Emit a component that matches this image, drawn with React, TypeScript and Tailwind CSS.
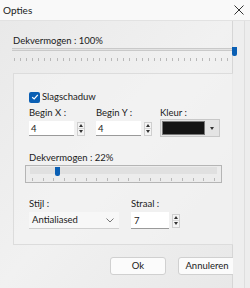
const font = { fontFamily: 'Lato, "Noto Sans", Arial, sans-serif' };

function Ticks({ count }: { count: number }) {
  return (
    <div className="flex justify-between px-[2px]">
      {Array.from({ length: count }).map((_, i) => (
        <div key={i} className="h-[3px] w-px bg-[#b8b8b8]" />
      ))}
    </div>
  );
}

function Spinner() {
  return (
    <div className="flex w-[8px] flex-col border border-[#cfcfcf] bg-[#f4f4f4]">
      <div className="flex h-[6px] items-center justify-center border-b border-[#d8d8d8]">
        <div className="h-0 w-0 border-x-[2px] border-b-[3px] border-x-transparent border-b-[#333]" />
      </div>
      <div className="flex h-[6px] items-center justify-center">
        <div className="h-0 w-0 border-x-[2px] border-t-[3px] border-x-transparent border-t-[#333]" />
      </div>
    </div>
  );
}

function SpinBox({ label, value }: { label: string; value: string }) {
  return (
    <div className="flex flex-col gap-[1px]">
      <span className="text-[9.5px] leading-[14px]">{label}</span>
      <div className="flex items-center gap-[3px]">
        <div className="h-[15px] w-[45px] border-b border-[#9a9a9a] bg-white pl-[2px] text-[9.5px] leading-[15px]">
          {value}
        </div>
        <Spinner />
      </div>
    </div>
  );
}

export default function App() {
  return (
    <div
      className="flex h-[288px] w-[250px] flex-col overflow-hidden bg-[#ededed] text-[#1a1a1a]"
      style={font}
    >
      <div className="flex h-[21px] items-center justify-between border-b border-[#e2e2e2] bg-[#f9f9f9] pl-[3px] pr-[6px]">
        <span className="text-[10px]">Opties</span>
        <svg width="10" height="10" viewBox="0 0 10 10">
          <path d="M0.5 0.5 L9.5 9.5 M9.5 0.5 L0.5 9.5" stroke="#333" strokeWidth="1" />
        </svg>
      </div>

      <div className="flex flex-1">
        <div className="flex w-[233px] flex-col border-r border-[#d6d6d6] bg-gradient-to-br from-[#e9e9e9] via-[#f1f1f1] to-[#e8e8e8] pl-[12px]">
          <div className="mt-[13px] pl-[1px] text-[9.5px] leading-[14px]">Dekvermogen : 100%</div>
          <div className="relative mt-[-1px] h-[9px]">
            <div className="absolute left-0 right-0 top-[1px] h-[3px] border-y border-[#c9c9c9] bg-[#e3e3e3]" />
            <div className="absolute right-[-5px] top-0 h-[9px] w-[5px] rounded-b-[2px] bg-[#0a5fb4]" />
          </div>
          <div className="mr-[2px] mt-[2px]">
            <Ticks count={36} />
          </div>

          <div className="ml-[1px] mt-[12px] flex h-[172px] w-[223px] flex-col border border-[#dcdcdc] bg-[#f2f2f2]/70 pl-[15px]">
            <div className="mt-[16px] flex items-center gap-[2px]">
              <div className="flex h-[11px] w-[11px] items-center justify-center rounded-[2px] bg-[#0a5fb4]">
                <svg width="8" height="8" viewBox="0 0 8 8">
                  <path d="M1.2 4.2 L3.2 6 L6.8 1.8" stroke="white" strokeWidth="1.2" fill="none" />
                </svg>
              </div>
              <span className="text-[9.5px] leading-[14px]">Slagschaduw</span>
            </div>

            <div className="mt-[2px] flex gap-[11px]">
              <SpinBox label="Begin X :" value="4" />
              <SpinBox label="Begin Y :" value="4" />
              <div className="ml-[-3px] flex flex-col gap-[1px]">
                <span className="text-[9.5px] leading-[14px]">Kleur :</span>
                <div className="mt-[-2px] flex h-[18px] w-[60px] border border-[#c8c8c8] bg-[#e4e4e4] p-[1px]">
                  <div className="flex-1 border border-[#777] bg-[#141414]" />
                  <div className="flex w-[13px] items-center justify-center">
                    <div className="h-0 w-0 border-x-[2px] border-t-[3px] border-x-transparent border-t-[#333]" />
                  </div>
                </div>
              </div>
            </div>

            <div className="mt-[14px] text-[9.5px] leading-[14px]">Dekvermogen : 22%</div>
            <div className="ml-[-4px] flex h-[18px] w-[197px] flex-col border border-[#b5b5b5] bg-[#ececec] px-[4px]">
              <div className="relative mt-[1px] h-[7px] bg-[#e0e0e0]">
                <div className="absolute left-[25px] top-0 h-[9px] w-[5px] rounded-b-[2px] bg-[#0a5fb4]" />
              </div>
              <div className="mt-[4px]">
                <Ticks count={18} />
              </div>
            </div>

            <div className="mt-[14px] flex gap-[12px]">
              <div className="flex flex-col gap-[1px]">
                <span className="text-[9.5px] leading-[14px]">Stijl :</span>
                <div className="flex h-[17px] w-[90px] items-center justify-between border-b border-[#cfcfcf] bg-[#f7f7f7] px-[3px]">
                  <span className="text-[9.5px]">Antialiased</span>
                  <svg width="8" height="5" viewBox="0 0 8 5" className="mr-[2px]">
                    <path d="M0.5 0.5 L4 4 L7.5 0.5" stroke="#777" strokeWidth="1" fill="none" />
                  </svg>
                </div>
              </div>
              <div className="flex flex-col gap-[1px]">
                <span className="text-[9.5px] leading-[14px]">Straal :</span>
                <div className="flex items-center gap-[3px]">
                  <div className="h-[17px] w-[38px] border-b border-[#9a9a9a] bg-white pl-[3px] text-[9.5px] leading-[17px]">7</div>
                  <Spinner />
                </div>
              </div>
            </div>
          </div>

          <div className="ml-[1px] mt-[12px] flex w-[223px] justify-end gap-[12px]">
            <button className="h-[18px] w-[56px] rounded-[3px] border border-[#d0d0d0] bg-[#fbfbfb] text-[9.5px] leading-[16px]">
              Ok
            </button>
            <button className="h-[18px] w-[58px] rounded-[3px] border border-[#d0d0d0] bg-[#fbfbfb] text-[9.5px] leading-[16px]">
              Annuleren
            </button>
          </div>
        </div>
        <div className="w-[12px] border-r border-[#dedede] bg-[#eeeeee]" />
      </div>
    </div>
  );
}
